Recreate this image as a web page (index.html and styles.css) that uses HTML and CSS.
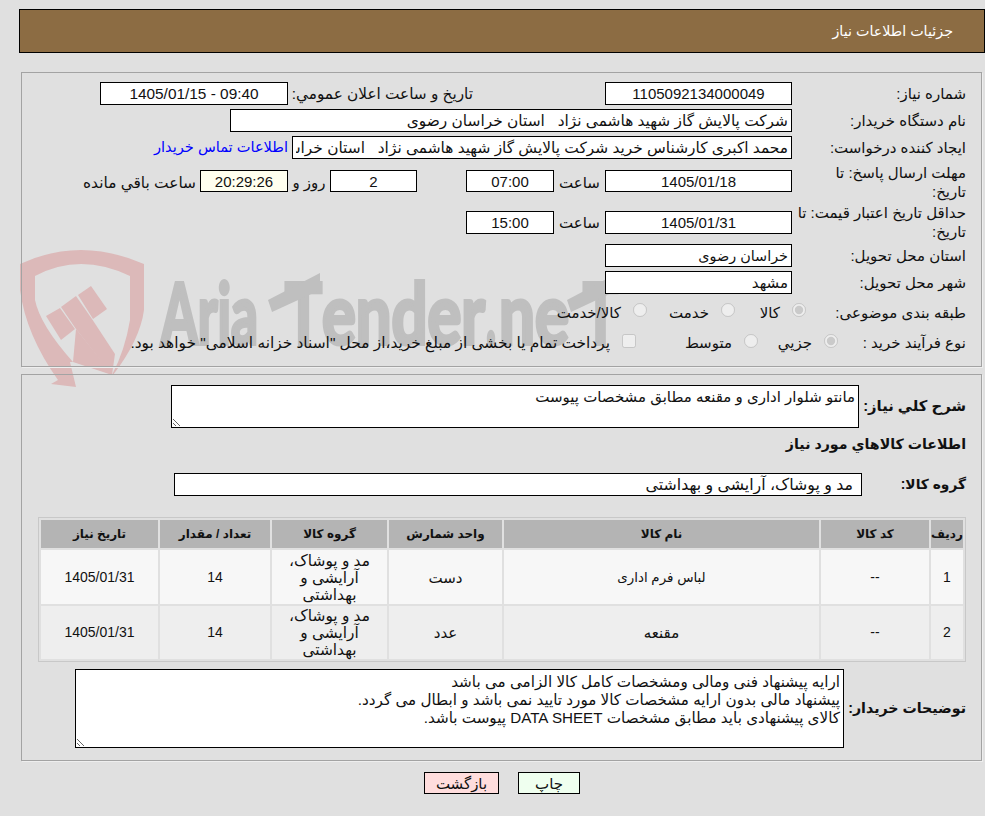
FILE: index.html
```html
<!DOCTYPE html>
<html lang="fa" dir="rtl">
<head>
<meta charset="utf-8">
<title>جزئیات اطلاعات نیاز</title>
<link rel="stylesheet" href="styles.css">
</head>
<body>
<svg class="watermark" width="985" height="816" viewBox="0 0 985 816" aria-hidden="true">
  <g fill="#dcb9b9">
    <path fill-rule="evenodd" d="M20 264 Q80 236 144 264 V310 Q140 340 113 375 L76 329 L73 362 L70 362 L76 387 L51 384 L58 380 Q26 335 20 290 Z M35 276 V300 Q40 325 73 362 L112 375 Q125 350 130 320 V276 Q80 252 35 276 Z"/>
    <path d="M46 316 L60 308 L75 329 L61 340 Z"/>
    <path d="M61 307 L76 296 L92 319 L115 354 L112 375 L76 329 Z"/>
    <path d="M78 295 L91 286 L107 309 L93 319 Z"/>
  </g>
  <g class="wm-text" fill="#bfbfbf" stroke="#bfbfbf" stroke-width="4">
    <text x="161" y="344" font-size="84" textLength="97" lengthAdjust="spacingAndGlyphs">Aria</text>
    <text x="285" y="344" font-size="84" textLength="37" lengthAdjust="spacingAndGlyphs">T</text>
    <text x="322" y="344" font-size="84" textLength="163" lengthAdjust="spacingAndGlyphs">ender</text>
    <text x="486" y="344" font-size="84" textLength="10" lengthAdjust="spacingAndGlyphs">.</text>
    <text x="499" y="344" font-size="84" textLength="70" lengthAdjust="spacingAndGlyphs">ne</text>
    <text x="583" y="344" font-size="84" textLength="35" lengthAdjust="spacingAndGlyphs">T</text>
    <polygon points="268,300 320,273 320,290 272,312" stroke="none"/>
    <polygon points="567,300 618,273 618,290 571,312" stroke="none"/>
  </g>
</svg>

<header class="title-bar">جزئیات اطلاعات نیاز</header>

<section class="panel panel-info">
  <div class="row row-std">
    <label class="lbl">شماره نیاز:</label>
    <input class="fld w187 ctr" readonly value="1105092134000049">
    <span class="gap132"></span>
    <span class="cell185">تاریخ و ساعت اعلان عمومي:</span>
    <input class="fld w188 ctr stamp" dir="ltr" readonly value="1405/01/15 - 09:40">
  </div>
  <div class="row row-std">
    <label class="lbl">نام دستگاه خریدار:</label>
    <input class="fld w562 long" readonly value="شرکت پالایش گاز شهید هاشمی نژاد   استان خراسان رضوی">
  </div>
  <div class="row row-std">
    <label class="lbl">ایجاد کننده درخواست:</label>
    <input class="fld w500 long" readonly value="محمد اکبری کارشناس خرید شرکت پالایش گاز شهید هاشمی نژاد   استان خراسان رضوی">
    <a class="contact" href="#">اطلاعات تماس خریدار</a>
  </div>
  <div class="row row-deadline">
    <label class="lbl">مهلت ارسال پاسخ: تا<br>تاریخ:</label>
    <input class="fld w187 ctr short" readonly value="1405/01/18">
    <span class="cell51">ساعت</span>
    <input class="fld w88 ctr short" readonly value="07:00">
    <span class="gap49"></span>
    <input class="fld w87 ctr short" readonly value="2">
    <span class="cell42">روز و</span>
    <input class="fld w88 ctr short timer" readonly value="20:29:26">
    <span class="remain">ساعت باقي مانده</span>
  </div>
  <div class="row row-validity">
    <label class="lbl">حداقل تاریخ اعتبار قیمت: تا<br>تاریخ:</label>
    <input class="fld w187 ctr" readonly value="1405/01/31">
    <span class="cell51">ساعت</span>
    <input class="fld w88 ctr" readonly value="15:00">
  </div>
  <div class="row row-std">
    <label class="lbl">استان محل تحویل:</label>
    <input class="fld w187 province" readonly value="خراسان رضوی">
  </div>
  <div class="row row-city">
    <label class="lbl">شهر محل تحویل:</label>
    <input class="fld w187" readonly value="مشهد">
  </div>
  <div class="row row-choice">
    <label class="lbl lbl-subject">طبقه بندی موضوعی:</label>
    <span class="opt w71"><input type="radio" disabled checked><span>کالا</span></span>
    <span class="opt w88o"><input type="radio" disabled><span>خدمت</span></span>
    <span class="opt"><input type="radio" disabled><span>کالا/خدمت</span></span>
  </div>
  <div class="row row-choice2">
    <label class="lbl lbl-process">نوع فرآیند خرید :</label>
    <span class="opt w80"><input type="radio" disabled checked><span>جزیي</span></span>
    <span class="opt w122"><input type="radio" disabled><span>متوسط</span></span>
    <span class="opt opt-long"><input type="checkbox" disabled><span>پرداخت تمام یا بخشی از مبلغ خرید،از محل "اسناد خزانه اسلامی" خواهد بود.</span></span>
  </div>
</section>

<section class="panel panel-goods">
  <div class="row row-desc">
    <label class="lbl-b w107 lbl-desc">شرح کلي نياز:</label>
    <textarea class="area area-desc" readonly>مانتو شلوار اداری و مقنعه مطابق مشخصات پیوست</textarea>
  </div>
  <h2 class="goods-title">اطلاعات کالاهاي مورد نياز</h2>
  <div class="row row-group">
    <label class="lbl-b w104 lbl-group">گروه کالا:</label>
    <input class="fld w688 indent" readonly value="مد و پوشاک، آرایشی و بهداشتی">
  </div>
  <table class="goods">
    <colgroup>
      <col class="c-row"><col class="c-code"><col class="c-name"><col class="c-unit"><col class="c-group"><col class="c-qty"><col class="c-date">
    </colgroup>
    <thead>
      <tr><th>ردیف</th><th>کد کالا</th><th>نام کالا</th><th>واحد شمارش</th><th>گروه کالا</th><th>تعداد / مقدار</th><th>تاریخ نیاز</th></tr>
    </thead>
    <tbody>
      <tr><td class="num">1</td><td class="num">--</td><td class="uniform">لباس فرم اداری</td><td>دست</td><td class="grp">مد و پوشاک، آرایشی و بهداشتی</td><td class="num">14</td><td class="num">1405/01/31</td></tr>
      <tr><td class="num">2</td><td class="num">--</td><td>مقنعه</td><td>عدد</td><td class="grp">مد و پوشاک، آرایشی و بهداشتی</td><td class="num">14</td><td class="num">1405/01/31</td></tr>
    </tbody>
  </table>
  <div class="row row-notes">
    <label class="lbl-b w122 nowrap">توضیحات خریدار:</label>
    <textarea class="area area-notes" readonly>ارایه پیشنهاد فنی ومالی ومشخصات کامل کالا الزامی می باشد
پیشنهاد مالی بدون ارایه مشخصات کالا مورد تایید نمی باشد و ابطال می گردد.
کالای پیشنهادی باید مطابق مشخصات DATA SHEET پیوست باشد.</textarea>
  </div>
</section>

<div class="actions">
  <button class="btn btn-print" type="button">چاپ</button>
  <button class="btn btn-back" type="button">بازگشت</button>
</div>
</body>
</html>
```

FILE: styles.css
```css
html { background: #e0e0e0; }
body {
  margin: 0;
  width: 985px;
  height: 816px;
  overflow: hidden;
  position: relative;
  color: #111;
  font: 15px/19px "Liberation Sans", "DejaVu Sans", sans-serif;
}
.watermark { position: absolute; top: 0; left: 0; z-index: -1; }
.wm-text text { font-family: "Lato", sans-serif; font-weight: 700; direction: ltr; unicode-bidi: bidi-override; }

.title-bar {
  box-sizing: border-box;
  height: 44px;
  margin: 9px 0 0 19px;
  padding: 12px 31px 0 0;
  border: 1px solid #000;
  background: #8c6c43;
  color: #fff;
  font-size: 14.3px;
}
.panel { box-sizing: border-box; border: 1px solid #a3a3a3; margin: 0 3px 0 0; width: 961px; box-shadow: 1px 1px 0 #eee; }
.panel-info { margin-top: 19px; height: 295px; padding-top: 9px; }
.panel-goods { margin-top: 7px; height: 387px; padding-top: 10px; }

.row { display: flex; align-items: center; padding-right: 15px; }
.row-std { margin-bottom: 4px; }
.row-deadline { margin-bottom: 2px; }
.row-validity { margin-bottom: 3px; }
.row-city { margin-bottom: 4px; }
.row-choice { height: 28px; }
.row-choice2 { height: 29px; margin-top: 2px; }

.lbl { width: 174px; flex: none; }
.lbl-subject { width: 160px; }
.lbl-process { width: 128px; }

.fld {
  box-sizing: border-box;
  height: 23px;
  flex: none;
  padding: 0 3px;
  border: 1px solid #000;
  border-radius: 0;
  background: #fff;
  color: #111;
  font: inherit;
  outline: none;
}
.short { height: 22px; margin-bottom: 2px; }
.ctr { text-align: center; }
.long { font-size: 15.4px; }
.stamp { font-size: 15.4px; }
.province { font-size: 14.4px; }
.timer { background: #ffffef; }
.indent { padding-right: 8px; font-size: 15.8px; }
.w187 { width: 187px; }
.w188 { width: 188px; }
.w562 { width: 562px; }
.w500 { width: 500px; }
.w88 { width: 88px; }
.w87 { width: 87px; }
.w688 { width: 688px; }
.gap132 { width: 132px; flex: none; }
.gap49 { width: 49px; flex: none; }
.cell185 { width: 185px; flex: none; white-space: nowrap; font-size: 15.3px; }
.cell51 { width: 51px; flex: none; text-align: center; }
.cell42 { width: 42px; flex: none; text-align: center; }
.remain { margin-right: 4px; font-size: 15.4px; }
.contact { margin-right: 4px; color: #00f; text-decoration: none; font-size: 14.6px; }

.opt { display: flex; align-items: center; flex: none; }
.opt input { width: 14px; height: 14px; margin: 0 0 4px 12px; flex: none; }
.opt span { white-space: nowrap; }
.opt-long { font-size: 15.4px; }
.w71 { width: 71px; }
.w88o { width: 88px; }
.w80 { width: 80px; }
.w122 { width: 122px; }

.lbl-b { flex: none; font-weight: 700; font-size: 14.2px; }
.lbl-desc { font-size: 14.8px; }
.lbl-group { font-size: 13.8px; }
.nowrap { white-space: nowrap; }
.w107 { width: 107px; }
.w104 { width: 104px; }

.area {
  box-sizing: border-box;
  flex: none;
  margin: 0;
  padding: 3px 3px 2px;
  border: 1px solid #000;
  border-radius: 0;
  background: #fff;
  color: #111;
  font: inherit;
  line-height: 18px;
  outline: none;
}
.area-desc { width: 688px; height: 43px; padding-top: 2px; }
.area-notes { width: 769px; height: 79px; font-size: 15.2px; }

.goods-title { margin: 7px 15px 0 0; font-size: 14.2px; line-height: 19px; font-weight: 700; }
.row-group { margin-top: 19px; }

.goods {
  width: 928px;
  margin: 21px 15px 7px 0;
  table-layout: fixed;
  border-collapse: separate;
  border-spacing: 2px;
  border: 1px solid #c8c8c8;
  text-align: center;
}
.c-row { width: 32px; }
.c-code { width: 108px; }
.c-name { width: 315px; }
.c-unit { width: 113px; }
.c-group { width: 115px; }
.c-qty { width: 110px; }
.c-date { width: 117px; }
.goods th { height: 28px; padding: 0; background: #b4b4b4; font-size: 12px; font-weight: 700; }
.goods td { height: 53px; padding: 0 6px; line-height: 17px; font-size: 15px; }
.goods td.num { font-size: 14px; }
.goods td.grp { font-size: 15.4px; }
.goods td.uniform { font-size: 13.4px; }
.goods tbody tr:nth-child(1) td { height: 54px; background: #f7f7f7; }
.goods tbody tr:nth-child(2) td { background: #eee; }

.actions { display: flex; gap: 19px; margin-top: 11px; padding-right: 405px; }
.btn {
  box-sizing: border-box;
  height: 22px;
  padding: 0;
  border: 1px solid #000;
  border-radius: 0;
  color: #111;
  font: inherit;
}
.btn-print { width: 62px; background: #efffef; }
.btn-back { width: 75px; background: #ffdddd; }
```
